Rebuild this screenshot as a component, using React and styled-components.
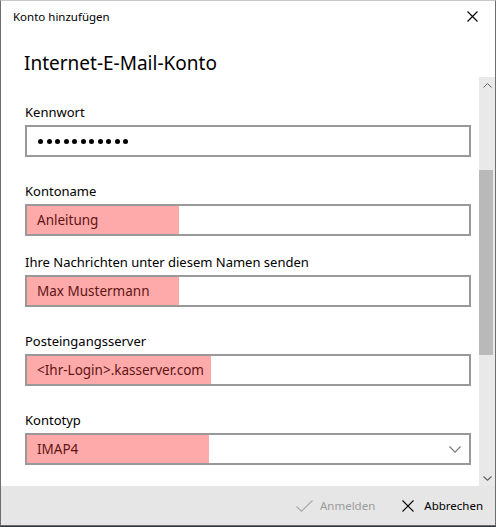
import React from 'react';
import styled, { createGlobalStyle } from 'styled-components';

const GlobalStyle = createGlobalStyle`
  html, body {
    margin: 0;
    padding: 0;
    background: #2f3640;
  }
  * {
    box-sizing: border-box;
  }
`;

const FONT = `"Noto Sans", "Open Sans", sans-serif`;

const Window = styled.div`
  width: 496px;
  height: 526px;
  display: flex;
  flex-direction: column;
  background: #fff;
  border: 1px solid #6e6e6e;
  border-top-color: #c8c8c8;
  font-family: ${FONT};
  color: #000;
  overflow: hidden;
`;

const TitleBar = styled.div`
  height: 31px;
  flex: none;
  display: flex;
  align-items: center;
  justify-content: space-between;
  padding: 0 17px 0 12px;
  font-size: 11.5px;
`;

const CloseButton = styled.span`
  display: flex;
  width: 11px;
  height: 11px;
`;

const Heading = styled.h1`
  flex: none;
  height: 45px;
  margin: 0;
  padding: 17px 0 0 23px;
  font-size: 19px;
  font-weight: 400;
  line-height: 28px;
`;

const Body = styled.div`
  flex: 1;
  display: flex;
  min-height: 0;
`;

const Main = styled.div`
  flex: 1;
  padding: 25px 8px 0 24px;
  overflow: hidden;
`;

const Field = styled.div`
  margin-bottom: ${(p) => p.$gap}px;
`;

const Label = styled.div`
  font-size: 13px;
  line-height: 20px;
  margin-bottom: 3px;
`;

const Box = styled.div`
  height: 32px;
  display: flex;
  align-items: stretch;
  border: 2px solid #999;
  background: #fff;
  font-size: 13.5px;
  line-height: 28px;
`;

const Value = styled.span`
  flex: none;
  width: ${(p) => p.$mark}px;
  padding-left: 10px;
  background: #ffaaaa;
  color: #5e1414;
  white-space: nowrap;
`;

const Dots = styled.span`
  display: flex;
  align-items: center;
  gap: 3.5px;
  padding-left: 11px;
`;

const Dot = styled.span`
  width: 5px;
  height: 5px;
  border-radius: 50%;
  background: #000;
`;

const Chevron = styled.span`
  margin-left: auto;
  margin-right: 8px;
  display: flex;
  align-items: center;
`;

const Scrollbar = styled.div`
  flex: none;
  width: 16px;
  display: flex;
  flex-direction: column;
  background: #e9e9e9;
  padding-right: 2px;
`;

const ScrollArrow = styled.div`
  height: 16px;
  flex: none;
  display: flex;
  align-items: center;
  justify-content: center;
  padding-left: 2px;
`;

const Track = styled.div`
  flex: 1;
`;

const Thumb = styled.div`
  margin-top: ${(p) => p.$offset}px;
  height: ${(p) => p.$size}px;
  background: #b9b9b9;
`;

const Footer = styled.div`
  flex: none;
  height: 39px;
  display: flex;
  align-items: center;
  justify-content: flex-end;
  gap: 27px;
  padding-right: 12px;
  background: #e6e6e6;
  font-size: 11.5px;
`;

const Action = styled.span`
  display: flex;
  align-items: center;
  gap: ${(p) => (p.$disabled ? 7 : 10)}px;
  color: ${(p) => (p.$disabled ? '#9b9b9b' : '#000')};
`;

const XIcon = ({ size = 11, color = '#000' }) => (
  <svg width={size} height={size} viewBox={`0 0 ${size} ${size}`}>
    <path
      d={`M0.5 0.5 L${size - 0.5} ${size - 0.5} M${size - 0.5} 0.5 L0.5 ${size - 0.5}`}
      stroke={color}
      strokeWidth="1.1"
      fill="none"
    />
  </svg>
);

const CheckIcon = () => (
  <svg width="17" height="12" viewBox="0 0 17 12">
    <path d="M0.5 6.5 L5.5 11.2 L16.5 0.5" stroke="#a8a8a8" strokeWidth="1.1" fill="none" />
  </svg>
);

const ChevronDown = ({ w = 12, h = 7, color = '#777' }) => (
  <svg width={w} height={h} viewBox={`0 0 ${w} ${h}`}>
    <path d={`M0.5 0.5 L${w / 2} ${h - 0.8} L${w - 0.5} 0.5`} stroke={color} strokeWidth="1.1" fill="none" />
  </svg>
);

const ChevronUp = ({ w = 9, h = 5, color = '#606060' }) => (
  <svg width={w} height={h} viewBox={`0 0 ${w} ${h}`}>
    <path d={`M0.5 ${h - 0.5} L${w / 2} 0.5 L${w - 0.5} ${h - 0.5}`} stroke={color} strokeWidth="1" fill="none" />
  </svg>
);

const fields = [
  { label: 'Kontoname', value: 'Anleitung', mark: 152, gap: 16 },
  { label: 'Ihre Nachrichten unter diesem Namen senden', value: 'Max Mustermann', mark: 152, gap: 24 },
  { label: 'Posteingangsserver', value: '<Ihr-Login>.kasserver.com', mark: 184, gap: 24 },
];

export default function App() {
  return (
    <>
      <GlobalStyle />
      <Window>
        <TitleBar>
          <span>Konto hinzufügen</span>
          <CloseButton>
            <XIcon />
          </CloseButton>
        </TitleBar>
        <Heading>Internet-E-Mail-Konto</Heading>
        <Body>
          <Main>
            <Field $gap={24}>
              <Label>Kennwort</Label>
              <Box>
                <Dots>
                  {Array.from({ length: 11 }).map((_, i) => (
                    <Dot key={i} />
                  ))}
                </Dots>
              </Box>
            </Field>
            {fields.map((f) => (
              <Field key={f.label} $gap={f.gap}>
                <Label>{f.label}</Label>
                <Box>
                  <Value $mark={f.mark}>{f.value}</Value>
                </Box>
              </Field>
            ))}
            <Field $gap={0}>
              <Label>Kontotyp</Label>
              <Box>
                <Value $mark={182}>IMAP4</Value>
                <Chevron>
                  <ChevronDown />
                </Chevron>
              </Box>
            </Field>
          </Main>
          <Scrollbar>
            <ScrollArrow>
              <ChevronUp />
            </ScrollArrow>
            <Track>
              <Thumb $offset={77} $size={185} />
            </Track>
            <ScrollArrow>
              <ChevronDown w={9} h={5} color="#606060" />
            </ScrollArrow>
          </Scrollbar>
        </Body>
        <Footer>
          <Action $disabled>
            <CheckIcon />
            Anmelden
          </Action>
          <Action>
            <XIcon size={12} />
            Abbrechen
          </Action>
        </Footer>
      </Window>
    </>
  );
}
